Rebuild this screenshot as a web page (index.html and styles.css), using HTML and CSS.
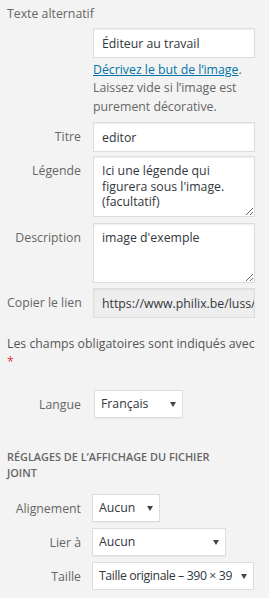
FILE: index.html
```html
<!DOCTYPE html>
<html lang="fr">
<head>
<meta charset="utf-8">
<link rel="stylesheet" href="styles.css">
</head>
<body>
<div class="sidebar">
  <div class="setting alt">
    <label class="label label-top" for="alt">Texte alternatif</label>
    <input id="alt" class="field" type="text" value="Éditeur au travail">
    <p class="help"><a href="#">Décrivez le but de l’image</a>. Laissez vide si l’image est purement décorative.</p>
  </div>
  <div class="setting s-title">
    <label class="label" for="title">Titre</label>
    <input id="title" class="field" type="text" value="editor">
  </div>
  <div class="setting s-caption">
    <label class="label" for="caption">Légende</label>
    <textarea id="caption" class="field area area-caption">Ici une légende qui figurera sous l'image. (facultatif)</textarea>
  </div>
  <div class="setting s-desc">
    <label class="label" for="desc">Description</label>
    <textarea id="desc" class="field area">image d'exemple</textarea>
  </div>
  <div class="setting s-url">
    <label class="label" for="url">Copier le lien</label>
    <input id="url" class="field readonly" type="text" readonly value="https://www.philix.be/luss/wp-content/uploads/2018/editor.jpg">
  </div>

  <p class="required">Les champs obligatoires sont indiqués avec <span class="star">*</span></p>

  <div class="setting s-lang">
    <label class="label" for="lang">Langue</label>
    <span class="select-wrap w-lang"><select id="lang" class="select"><option>Français</option></select></span>
  </div>

  <h2 class="heading">Réglages de l’affichage du fichier joint</h2>

  <div class="setting s-sel s-align">
    <label class="label" for="align">Alignement</label>
    <span class="select-wrap w-align"><select id="align" class="select"><option>Aucun</option></select></span>
  </div>
  <div class="setting s-sel">
    <label class="label" for="link">Lier à</label>
    <span class="select-wrap w-link"><select id="link" class="select"><option>Aucun</option></select></span>
  </div>
  <div class="setting s-sel">
    <label class="label" for="size">Taille</label>
    <span class="select-wrap w-size"><select id="size" class="select select-size"><option>Taille originale – 390 × 390</option></select></span>
  </div>
</div>
</body>
</html>
```
FILE: styles.css
```css
html, body {
  margin: 0;
  background: #f3f3f3;
}
body {
  font-family: "Open Sans", "Noto Sans", sans-serif;
  font-size: 12.3px;
  line-height: 1.5;
  color: #555;
}
.sidebar {
  padding: 5px 12px 0 7px;
}
.setting {
  display: grid;
  grid-template-columns: 74px 162px;
  column-gap: 12px;
  align-items: start;
}
.label {
  text-align: right;
  color: #666;
  padding-top: 6px;
  white-space: nowrap;
}
.label-top {
  grid-column: 1 / 3;
  text-align: left;
  padding-top: 0;
  margin-bottom: 5px;
}
.alt .field,
.alt .help {
  grid-column: 2;
}
.field {
  box-sizing: border-box;
  width: 162px;
  height: 30px;
  margin: 0;
  padding: 0 8px;
  border: 1px solid #ddd;
  background: #fff;
  box-shadow: inset 0 1px 2px rgba(0, 0, 0, .07);
  font-family: "Open Sans", "Noto Sans", sans-serif;
  font-size: 12.3px;
  color: #32373c;
  outline: none;
}
.area {
  height: 60px;
  padding: 6px 8px;
  line-height: 1.26;
  resize: vertical;
  overflow: auto;
  display: block;
}
.area-caption {
  height: 61px;
}
.readonly {
  background: #eee;
  padding: 0 0 0 8px;
}
.help {
  margin: 2.5px 0 0;
  color: #666;
}
.help a {
  color: #0073aa;
  text-decoration: underline;
}
.s-title { margin-top: 6px; }
.s-caption { margin-top: 4px; }
.s-desc { margin-top: 6px; }
.s-url { margin-top: 5px; }

.required {
  margin: 16.5px 0 0;
  color: #555;
}
.star {
  color: #dc3232;
}
.s-lang {
  margin-top: 18px;
  column-gap: 13px;
}
.heading {
  margin: 31px 0 0;
  padding-right: 20px;
  font-size: 10.9px;
  line-height: 16.5px;
  font-weight: 600;
  text-transform: uppercase;
  color: #666;
}
.s-sel {
  margin-top: 6px;
  column-gap: 11px;
}
.s-align {
  margin-top: 12px;
}
.select-wrap {
  position: relative;
  display: block;
  background: #fff;
}
.select-wrap::after {
  content: "";
  position: absolute;
  right: 7px;
  top: 12px;
  border-left: 3px solid transparent;
  border-right: 3px solid transparent;
  border-top: 5px solid #444;
  pointer-events: none;
}
.select {
  -webkit-appearance: none;
  appearance: none;
  box-sizing: border-box;
  display: block;
  width: 100%;
  height: 28px;
  margin: 0;
  padding: 0 17px 0 6px;
  border: 1px solid #ddd;
  border-radius: 0;
  background: #fff;
  box-shadow: 0 1px 0 rgba(0, 0, 0, .03);
  font-family: "Open Sans", "Noto Sans", sans-serif;
  font-size: 12.3px;
  color: #32373c;
  outline: none;
}
.select-size {
  padding-right: 21px;
  letter-spacing: -0.4px;
}
.w-lang { width: 89px; }
.w-align { width: 68px; }
.w-link { width: 134px; }
.w-size { width: 162px; }
```
